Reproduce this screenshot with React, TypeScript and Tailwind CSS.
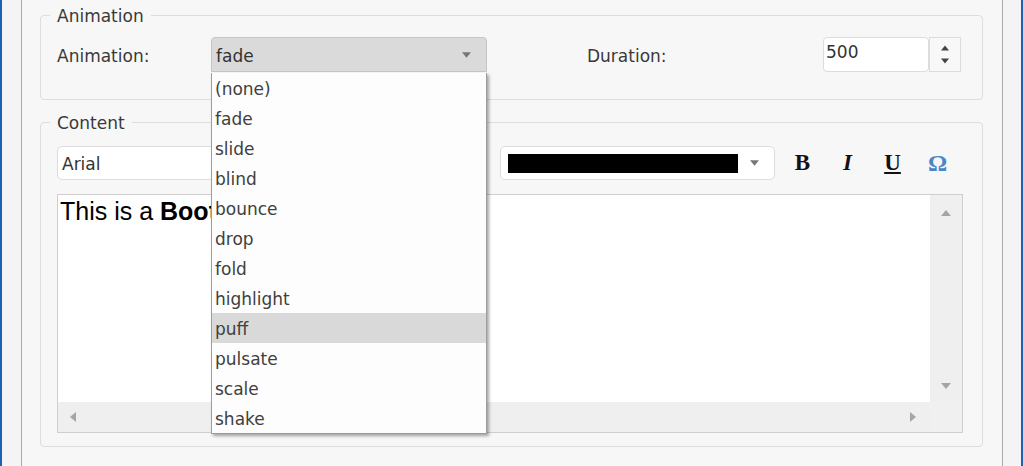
import { useState } from "react";

const effects = [
  "(none)",
  "fade",
  "slide",
  "blind",
  "bounce",
  "drop",
  "fold",
  "highlight",
  "puff",
  "pulsate",
  "scale",
  "shake",
];

function Caret({ dir = "down", className = "" }: { dir?: "down" | "up" | "left" | "right"; className?: string }) {
  const pts = {
    down: "0,0 10,0 5,6",
    up: "0,6 10,6 5,0",
    left: "6,0 6,10 0,5",
    right: "0,0 0,10 6,5",
  }[dir];
  const vertical = dir === "up" || dir === "down";
  return (
    <svg
      width={vertical ? 10 : 6}
      height={vertical ? 6 : 10}
      viewBox={vertical ? "0 0 10 6" : "0 0 6 10"}
      className={className}
    >
      <polygon points={pts} fill="currentColor" />
    </svg>
  );
}

export default function App() {
  const [hover] = useState("puff");

  return (
    <div className="w-[1023px] h-[466px] flex border-x-2 border-[#1b63b3] bg-[#f4f4f4] overflow-hidden font-['DejaVu_Sans',sans-serif] text-[17px] text-[#3a3a3a]">
      <div className="ml-[19px] w-[982px] h-full border-x border-[#a9a9a9] bg-[#f7f7f7] pl-[18px] pr-[19px]">
        {/* Animation */}
        <fieldset className="mt-[4px] border border-[#dddddd] rounded-[4px] pl-[16px] pr-[18px] pt-[11px] pb-[27px]">
          <legend className="-ml-[7px] px-[7px] pt-[2px] leading-[20px]">Animation</legend>
          <div className="flex items-center">
            <span className="w-[154px] mt-[4px]">Animation:</span>
            <div className="relative w-[276px]">
              <div className="h-[35px] flex items-center justify-between border border-[#c5c5c5] rounded-t-[4px] bg-[#dadada] pl-[4px] pr-[15px] text-[#333]">
                <span className="mt-[4px]">fade</span>
                <Caret className="text-[#777] w-[9px]" />
              </div>
              {/* open menu */}
              <ul className="absolute left-0 top-full mt-[1px] w-[276px] z-10 bg-[#fdfdfd] border border-[#9d9d9d] border-t-0 shadow-[2px_2px_3px_rgba(0,0,0,0.35)] text-[#404040]">
                {effects.map((e) => (
                  <li
                    key={e}
                    className={
                      "h-[30px] pt-[3px] leading-[27px] pl-[3px] " + (e === hover ? "bg-[#d9d9d9]" : "")
                    }
                  >
                    {e}
                  </li>
                ))}
              </ul>
            </div>
            <span className="ml-[100px] w-[236px] mt-[4px]">Duration:</span>
            <div className="flex">
              <div className="w-[106px] h-[35px] border border-[#dcdcdc] rounded-[4px] bg-white pl-[2px] leading-[28px] text-[#333]">
                500
              </div>
              <div className="w-[32px] h-[35px] border border-[#dcdcdc] bg-[#f8f8f8] flex flex-col items-center justify-center gap-[7px] text-[#444]">
                <Caret dir="up" className="w-[8px]" />
                <Caret dir="down" className="w-[8px]" />
              </div>
            </div>
          </div>
        </fieldset>

        {/* Content */}
        <fieldset className="mt-[11px] border border-[#dddddd] rounded-[4px] pl-[16px] pr-[18px] pt-[13px] pb-[13px]">
          <legend className="-ml-[7px] px-[7px] pt-[2px] leading-[20px]">Content</legend>
          <div className="flex items-center h-[34px]">
            <div className="w-[214px] h-[34px] flex items-center border border-[#dddddd] rounded-[5px] bg-white pl-[4px] pt-[4px] text-[#333]">
              Arial
            </div>
            <div className="ml-[10px] w-[200px] h-[34px] border border-[#dddddd] rounded-[5px] bg-white" />
            <div className="ml-[19px] w-[275px] h-[34px] flex items-center border border-[#dddddd] rounded-[5px] bg-white pl-[7px] pr-[15px] gap-[12px]">
              <div className="flex-1 h-[19px] bg-black" />
              <Caret className="text-[#777] w-[9px]" />
            </div>
            <div className="ml-[5px] flex items-center font-['Liberation_Serif',serif] text-[23px] text-[#111]">
              <span className="w-[45px] text-center font-bold">B</span>
              <span className="w-[45px] text-center font-bold italic">I</span>
              <span className="w-[45px] text-center font-bold underline underline-offset-2 decoration-2">U</span>
              <span className="w-[45px] text-center text-[#4a87c9] font-bold text-[24px]">Ω</span>
            </div>
          </div>

          <div className="mt-[14px] w-[906px] h-[239px] border border-[#cfcfcf] bg-white flex flex-col">
            <div className="flex flex-1 min-h-0">
              <div className="flex-1 pl-[2px] pt-[3px] leading-[27px] font-['Liberation_Sans',Arial,sans-serif] text-[25px] text-black">
                This is a <b>Bootstrap</b> editor
              </div>
              <div className="w-[32px] bg-[#efefef] flex flex-col items-center justify-between pt-[15px] pb-[13px] text-[#a5a5a5]">
                <Caret dir="up" />
                <Caret dir="down" />
              </div>
            </div>
            <div className="flex h-[30px]">
              <div className="flex-1 bg-[#efefef] flex items-center justify-between pl-[12px] pr-[14px] text-[#a5a5a5]">
                <Caret dir="left" />
                <Caret dir="right" />
              </div>
              <div className="w-[32px] bg-[#f0f0f0]" />
            </div>
          </div>
        </fieldset>
      </div>
    </div>
  );
}
